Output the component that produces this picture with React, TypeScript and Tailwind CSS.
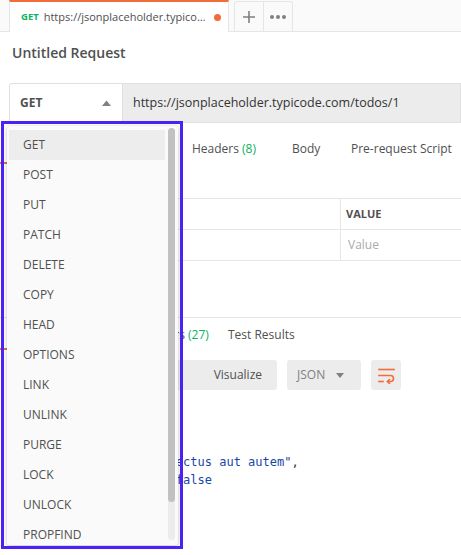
import React from 'react';

const methods = [
  'GET', 'POST', 'PUT', 'PATCH', 'DELETE', 'COPY', 'HEAD',
  'OPTIONS', 'LINK', 'UNLINK', 'PURGE', 'LOCK', 'UNLOCK', 'PROPFIND',
];

const codeLines: React.ReactNode[] = [
  <span className="text-[#333]">{'{'}</span>,
  <>
    <span className="text-[#a31515]">{'    "userId"'}</span>
    <span className="text-[#333]">: </span>
    <span className="text-[#1a46a8]">1</span>
    <span className="text-[#333]">,</span>
  </>,
  <>
    <span className="text-[#a31515]">{'    "id"'}</span>
    <span className="text-[#333]">: </span>
    <span className="text-[#1a46a8]">1</span>
    <span className="text-[#333]">,</span>
  </>,
  <>
    <span className="text-[#a31515]">{'    "title"'}</span>
    <span className="text-[#333]">: </span>
    <span className="text-[#1a46a8]">"delectus aut autem"</span>
    <span className="text-[#333]">,</span>
  </>,
  <>
    <span className="text-[#a31515]">{'    "completed"'}</span>
    <span className="text-[#333]">: </span>
    <span className="text-[#1a46a8]">false</span>
  </>,
  <span className="text-[#333]">{'}'}</span>,
];

function WrapIcon() {
  return (
    <svg width="17" height="17" viewBox="0 0 17 17" fill="none" stroke="#f26b3a" strokeWidth="1.6" strokeLinecap="square">
      <path d="M1 2.5H16" />
      <path d="M1 8.5H12.5a3 3 0 0 1 0 6H9.5" />
      <path d="M11.5 12.5L9.5 14.5L11.5 16.5" strokeLinecap="round" strokeLinejoin="round" />
      <path d="M1 14.5H5" />
    </svg>
  );
}

function MethodDropdown() {
  return (
    <>
      <div className="absolute left-[7px] top-[126px] w-[171px] h-[419px] bg-[#fafafa] rounded-[3px] shadow-[0_1px_4px_rgba(0,0,0,0.25)] overflow-hidden flex">
        <div className="flex-1 pt-[4px] pl-[2px]">
          {methods.map((m, i) => (
            <div
              key={m}
              className={
                'h-[30px] flex items-center pl-[14px] text-[12px] text-[#505050] ' +
                (i === 0 ? 'bg-[#ededed]' : '')
              }
            >
              {m}
            </div>
          ))}
        </div>
        <div className="w-[13px] flex justify-center pt-[2px] pb-[5px]">
          <div className="w-[7px] h-full rounded-[4px] bg-[#ececec] flex flex-col">
            <div className="h-[374px] rounded-[4px] bg-[#c1c1c1]" />
          </div>
        </div>
      </div>
      <div className="absolute left-[1px] top-[121px] w-[182px] h-[428px] border-[3px] border-[#4a22f2] pointer-events-none" />
    </>
  );
}

export default function App() {
  return (
    <div
      className="relative w-[461px] h-[555px] overflow-hidden bg-white text-[#505050]"
      style={{ fontFamily: '"Open Sans", "Noto Sans", sans-serif' }}
    >
      {/* tab bar */}
      <div className="h-[32px] bg-[#fafafa] border-b border-[#e6e6e6] flex items-end pl-[9px]">
        <div className="h-[32px] -mb-px w-[220px] bg-white border-x border-[#e6e6e6] border-t-[2px] border-t-[#f26b3a] flex items-center pl-[11px] pr-[7px]">
          <span className="text-[9.5px] font-bold text-[#0cb363] mr-[5px]">GET</span>
          <span className="text-[11px] text-[#505050] truncate flex-1">https://jsonplaceholder.typicode.com/todos/1</span>
          <span className="w-[7px] h-[7px] rounded-full bg-[#f26b3a] ml-[3px] shrink-0" />
        </div>
        <div className="ml-[5px] h-[30px] w-[30px] border border-b-0 border-[#e6e6e6] rounded-tl-[3px] flex items-center justify-center">
          <svg width="12" height="12" viewBox="0 0 12 12" stroke="#808080" strokeWidth="1.6">
            <path d="M6 0V12M0 6H12" />
          </svg>
        </div>
        <div className="h-[30px] w-[29px] border border-l-0 border-b-0 border-[#e6e6e6] rounded-tr-[3px] flex items-center justify-center gap-[2px]">
          <span className="w-[4px] h-[4px] rounded-full bg-[#808080]" />
          <span className="w-[4px] h-[4px] rounded-full bg-[#808080]" />
          <span className="w-[4px] h-[4px] rounded-full bg-[#808080]" />
        </div>
      </div>

      {/* title */}
      <div className="mt-[11px] pl-[12px] h-[20px] leading-[20px] text-[14px] font-semibold text-[#505050]">
        Untitled Request
      </div>

      {/* url row */}
      <div className="mt-[20px] ml-[9px] h-[40px] flex">
        <div className="w-[114px] bg-white border border-[#e0e0e0] rounded-l-[3px] flex items-center pl-[10px] pr-[11px]">
          <span className="text-[12px] font-bold text-[#505050] flex-1">GET</span>
          <svg width="9" height="6" viewBox="0 0 9 6">
            <path d="M0 6L4.5 0.5L9 6Z" fill="#808080" />
          </svg>
        </div>
        <div className="flex-1 bg-[#ececec] border border-l-0 border-[#e0e0e0] flex items-center pl-[10px] text-[12.5px] text-[#333]">
          https://jsonplaceholder.typicode.com/todos/1
        </div>
      </div>

      {/* request tabs */}
      <div className="mt-[11px] h-[30px] flex items-center text-[12px] whitespace-nowrap">
        <div className="relative w-[70px] h-full flex items-center ml-[12px]">
          Params
          <div className="absolute -left-[12px] right-[10px] bottom-[0px] h-[2px] bg-[#f26b3a]" />
        </div>
        <div className="w-[110px]">Authorization</div>
        <div className="w-[100px]">
          Headers <span className="text-[#0cb363]">(8)</span>
        </div>
        <div className="w-[59px]">Body</div>
        <div>Pre-request Script</div>
      </div>

      <div className="mt-[6px] pl-[12px] h-[20px] text-[12px]">Query Params</div>

      {/* params table */}
      <div className="mt-[8px] ml-[9px] border-t border-[#e6e6e6] text-[12px]">
        <div className="h-[31px] flex border-b border-[#e6e6e6]">
          <div className="w-[332px] border-r border-[#e6e6e6] flex items-center pl-[8px] text-[11px] font-bold">KEY</div>
          <div className="flex-1 flex items-center pl-[5px] text-[11px] font-bold text-[#505050]">VALUE</div>
        </div>
        <div className="h-[31px] flex border-b border-[#e6e6e6]">
          <div className="w-[332px] border-r border-[#e6e6e6] flex items-center pl-[8px] text-[#aaa]">Key</div>
          <div className="flex-1 flex items-center pl-[7px] text-[#aaa]">Value</div>
        </div>
      </div>

      {/* response */}
      <div className="mt-[56px] border-t border-[#e6e6e6]">
        <div className="h-[32px] pt-[1px] flex items-center text-[12px] whitespace-nowrap">
          <div className="relative w-[56px] h-full flex items-center ml-[12px]">
            Body
            <div className="absolute -left-[12px] right-[14px] bottom-[0px] h-[2px] bg-[#f26b3a]" />
          </div>
          <div className="w-[70px]">Cookies</div>
          <div className="w-[90px]">
            Headers <span className="text-[#0cb363]">(27)</span>
          </div>
          <div>Test Results</div>
        </div>

        <div className="mt-[10px] ml-[10px] h-[30px] flex text-[12px]">
          <div className="w-[267px] bg-[#ececec] rounded-[3px] flex items-center text-[#505050]">
            <div className="ml-[2px] h-[26px] px-[12px] flex items-center bg-white rounded-[3px]">Pretty</div>
            <div className="px-[12px]">Raw</div>
            <div className="px-[12px]">Preview</div>
            <div className="ml-auto pr-[15px]">Visualize</div>
          </div>
          <div className="ml-[10px] w-[74px] bg-[#ececec] rounded-[3px] flex items-center pl-[10px] pr-[17px] text-[#808080]">
            <span className="flex-1">JSON</span>
            <svg width="8" height="5" viewBox="0 0 8 5">
              <path d="M0 0H8L4 5Z" fill="#808080" />
            </svg>
          </div>
          <div className="ml-[10px] w-[30px] bg-[#ececec] rounded-[3px] flex items-center justify-center">
            <WrapIcon />
          </div>
        </div>

        <div
          className="mt-[9px] ml-[12px] flex text-[12px] leading-[18px]"
          style={{ fontFamily: '"DejaVu Sans Mono", "Liberation Mono", monospace' }}
        >
          <div className="w-[41px] pr-[10px] text-right text-[#999]">
            {codeLines.map((_, i) => (
              <div key={i}>{i + 1}</div>
            ))}
          </div>
          <div className="whitespace-pre">
            {codeLines.map((l, i) => (
              <div key={i}>{l}</div>
            ))}
          </div>
        </div>
      </div>

      <MethodDropdown />
    </div>
  );
}
